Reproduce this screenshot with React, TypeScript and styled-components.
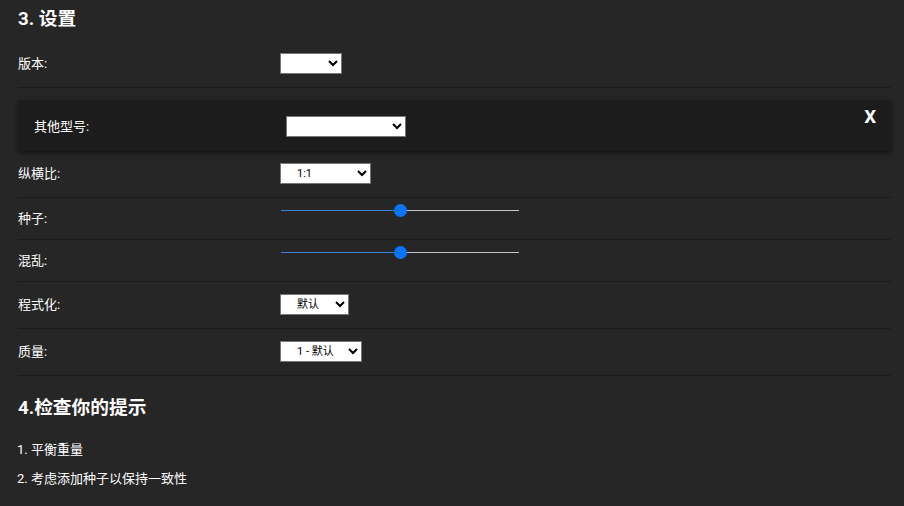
import React from 'react';
import styled, { createGlobalStyle } from 'styled-components';

const GlobalStyle = createGlobalStyle`
    html, body {
        margin: 0;
        padding: 0;
        background: #262626;
    }
    body {
        font-family: Roboto, 'Noto Sans CJK SC', sans-serif;
        color: #ffffff;
    }
`;

const Page = styled.div`
    padding: 0 13px 20px 18px;
`;

const Heading = styled.h3<{ $gap: number }>`
    margin: ${(p) => p.$gap}px 0 11px;
    font-size: 18.72px;
    line-height: 22px;
    font-weight: 700;
`;

const Row = styled.div<{ $slider?: boolean }>`
    display: flex;
    align-items: ${(p) => (p.$slider ? 'flex-start' : 'center')};
    box-sizing: border-box;
    height: ${(p) => (p.$slider ? '42px' : 'auto')};
    padding: ${(p) => (p.$slider ? '4px 0 0' : '12px 0 13px')};
    border-bottom: 1px solid #1b1b1b;
`;

const Label = styled.label<{ $width?: number; $drop?: number }>`
    width: ${(p) => p.$width ?? 262}px;
    flex: none;
    margin-top: ${(p) => p.$drop ?? 0}px;
    font-size: 13px;
    line-height: 18px;
`;

const Select = styled.select<{ $width: number }>`
    width: ${(p) => p.$width}px;
    height: 21px;
    padding: 0 0 0 12px;
    font-family: Roboto, 'Noto Sans CJK SC', sans-serif;
    font-size: 11px;
    color: #000;
    background: #fff;
    border: 1px solid #767676;
    border-radius: 0;
`;

const Slider = styled.input`
    -webkit-appearance: none;
    appearance: none;
    width: 238px;
    height: 13px;
    margin: 2px 0 0 1px;
    padding: 0;
    border: none;
    background-color: transparent;
    background-repeat: no-repeat;
    background-position: center;
    background-size: 100% 1px;
    outline: none;

    &::-webkit-slider-runnable-track {
        height: 13px;
        background: transparent;
    }

    &::-webkit-slider-thumb {
        -webkit-appearance: none;
        width: 13px;
        height: 13px;
        border: none;
        border-radius: 50%;
        background: #0a74ff;
    }
`;

const Panel = styled.div`
    position: relative;
    display: flex;
    align-items: center;
    margin-top: 12px;
    padding: 16px 16px 14px;
    background: #1c1c1c;
    border-radius: 2px;
    box-shadow: 0 2px 5px rgba(0, 0, 0, 0.55);
`;

const CloseButton = styled.button`
    position: absolute;
    top: 6px;
    right: 15px;
    padding: 0;
    border: none;
    background: none;
    color: #fff;
    font-family: Roboto, sans-serif;
    font-size: 18.72px;
    font-weight: 700;
    line-height: 22px;
    cursor: pointer;
`;

const Tips = styled.div`
    margin-left: -1px;
    padding-top: 11px;
`;

const Tip = styled.p`
    margin: 0 0 11px;
    font-size: 13px;
    line-height: 18px;
`;

const Range = ({ value }: { value: number }) => (
    <Slider
        type="range"
        min={0}
        max={100}
        defaultValue={value}
        style={{
            backgroundImage: `linear-gradient(to right, #3a80dc ${value}%, #c6c6c6 ${value}%)`,
        }}
    />
);

export default function App() {
    return (
        <Page>
            <GlobalStyle />
            <Heading $gap={8}>3. 设置</Heading>

            <Row>
                <Label>版本:</Label>
                <Select $width={62} defaultValue="">
                    <option value=""></option>
                </Select>
            </Row>

            <Panel>
                <Label $width={252}>其他型号:</Label>
                <Select $width={120} defaultValue="">
                    <option value=""></option>
                </Select>
                <CloseButton>X</CloseButton>
            </Panel>

            <Row>
                <Label>纵横比:</Label>
                <Select $width={91} defaultValue="1:1">
                    <option value="1:1">1:1</option>
                </Select>
            </Row>

            <Row $slider>
                <Label $drop={8}>种子:</Label>
                <Range value={50} />
            </Row>

            <Row $slider>
                <Label $drop={8}>混乱:</Label>
                <Range value={50} />
            </Row>

            <Row>
                <Label>程式化:</Label>
                <Select $width={69} defaultValue="默认">
                    <option value="默认">默认</option>
                </Select>
            </Row>

            <Row>
                <Label>质量:</Label>
                <Select $width={82} defaultValue="1">
                    <option value="1">1 - 默认</option>
                </Select>
            </Row>

            <Heading $gap={21}>4.检查你的提示</Heading>
            <Tips>
                <Tip>1. 平衡重量</Tip>
                <Tip>2. 考虑添加种子以保持一致性</Tip>
            </Tips>
        </Page>
    );
}
